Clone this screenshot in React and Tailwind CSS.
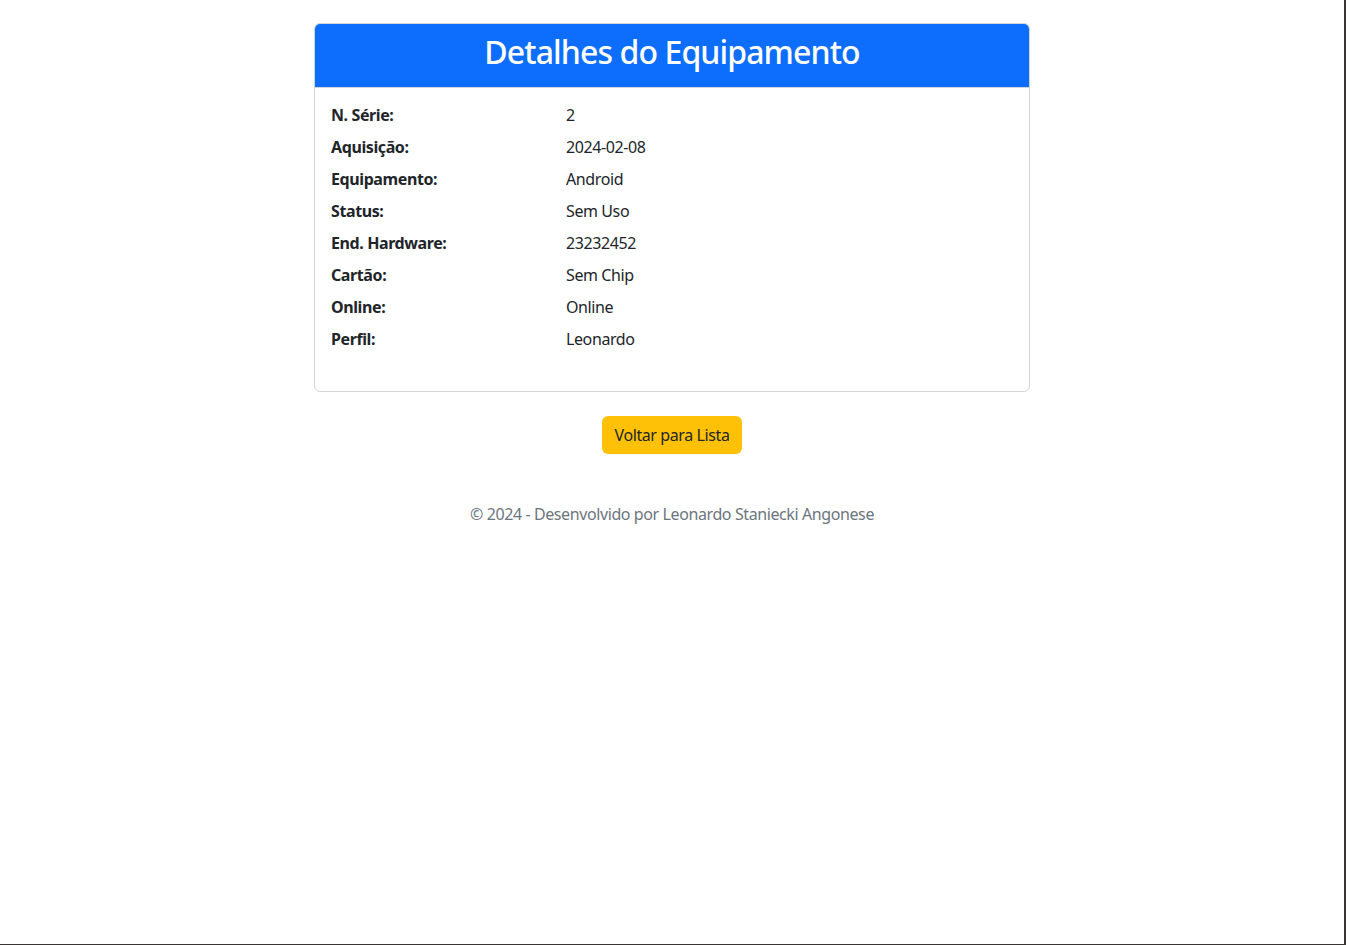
export default function App() {
  const rows = [
    ["N. Série:", "2"],
    ["Aquisição:", "2024-02-08"],
    ["Equipamento:", "Android"],
    ["Status:", "Sem Uso"],
    ["End. Hardware:", "23232452"],
    ["Cartão:", "Sem Chip"],
    ["Online:", "Online"],
    ["Perfil:", "Leonardo"],
  ];
  return (
    <div
      className="w-[1346px] h-[945px] bg-white border-r-2 border-b border-[#3a3535] text-[#212529] text-[16px] leading-[24px] tracking-[-0.4px] overflow-hidden"
      style={{ fontFamily: '"Noto Sans", "Open Sans", sans-serif' }}
    >
      <div className="flex flex-col items-center pt-[23px]">
        <div className="w-[716px] border border-[#d4d4d4] rounded-[6px] overflow-hidden">
          <div className="bg-[#0d6efd] border-b border-[#d4d4d4] px-4 pt-[9px] pb-[16px] text-center">
            <h2 className="text-white text-[32px] leading-[38px] font-medium tracking-[-0.9px]">Detalhes do Equipamento</h2>
          </div>
          <div className="px-4 pt-[15px] pb-[32px]">
            {rows.map(([k, v]) => (
              <div key={k} className="flex mb-[8px]">
                <div className="w-[235px] font-bold">{k}</div>
                <div>{v}</div>
              </div>
            ))}
          </div>
        </div>
        <button className="mt-[24px] h-[38px] px-[13px] bg-[#ffc107] rounded-[6px] text-[#212529]">
          Voltar para Lista
        </button>
        <div className="mt-[48px] text-[#6c757d]">© 2024 - Desenvolvido por Leonardo Staniecki Angonese</div>
      </div>
    </div>
  );
}
